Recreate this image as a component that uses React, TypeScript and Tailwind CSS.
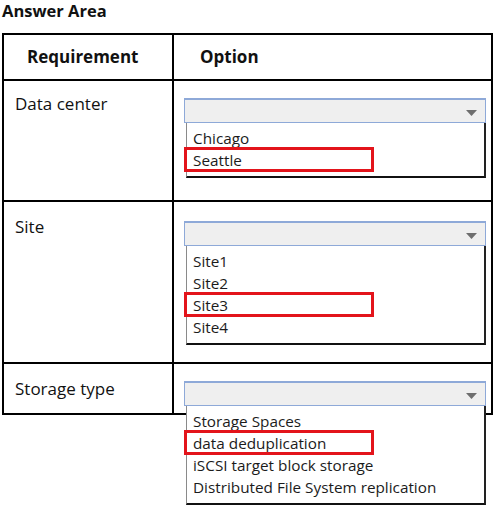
const font = { fontFamily: '"Open Sans", "Noto Sans", "Liberation Sans", sans-serif' };

type DropProps = {
  items: string[];
  picked: number;
};

function Dropdown({ items, picked }: DropProps) {
  return (
    <div className="ml-[10px] w-[302px]">
      <div className="relative h-[25px] border border-[#8ea9d8] border-t-2 bg-[#efefef]">
        <svg
          className="absolute right-[8px] top-[10px]"
          width="11"
          height="6"
          viewBox="0 0 11 6"
        >
          <polygon points="0,0 11,0 5.5,6" fill="#6e6e6e" />
        </svg>
      </div>
      <div className="ml-[2px] border-l border-[#8a8a8a] border-r-2 border-r-[#222] border-b-2 border-b-[#111] bg-white pt-[4px] pb-[5px]">
        {items.map((item, i) => (
          <div
            key={item}
            className="relative h-[22px] pl-[6px] text-[15.3px] leading-[22px] text-[#1b1b1b]"
          >
            {item}
            {i === picked && (
              <span className="absolute -left-[3px] -top-[2px] h-[25px] w-[190px] border-[3px] border-[#e3141b]" />
            )}
          </div>
        ))}
      </div>
    </div>
  );
}

export default function App() {
  return (
    <div className="h-[506px] w-[495px] bg-white text-[#111]" style={font}>
      <div className="pl-[2px] text-[16.5px] font-bold leading-[21px]">
        Answer Area
      </div>
      <div className="ml-[2px] mt-[12px] w-[491px] border-2 border-black">
        <div className="flex h-[44px] items-center text-[17px] font-bold">
          <div className="flex h-full w-[170px] items-center border-r-2 border-black pl-[23px]">
            Requirement
          </div>
          <div className="pl-[26px]">Option</div>
        </div>

        <div className="flex h-[121px] border-t-2 border-black">
          <div className="w-[170px] border-r-2 border-black pl-[11px] pt-[11px] text-[17px] leading-[24px]">
            Data center
          </div>
          <div className="pt-[17px]">
            <Dropdown items={["Chicago", "Seattle"]} picked={1} />
          </div>
        </div>

        <div className="flex h-[162px] border-t-2 border-black">
          <div className="w-[170px] border-r-2 border-black pl-[11px] pt-[13px] text-[17px] leading-[24px]">
            Site
          </div>
          <div className="pt-[19px]">
            <Dropdown items={["Site1", "Site2", "Site3", "Site4"]} picked={2} />
          </div>
        </div>

        <div className="flex h-[51px] border-t-2 border-black">
          <div className="w-[170px] border-r-2 border-black pl-[11px] pt-[13px] text-[17px] leading-[24px]">
            Storage type
          </div>
          <div className="relative z-10 pt-[17px]">
            <Dropdown
              items={[
                "Storage Spaces",
                "data deduplication",
                "iSCSI target block storage",
                "Distributed File System replication",
              ]}
              picked={1}
            />
          </div>
        </div>
      </div>
    </div>
  );
}
